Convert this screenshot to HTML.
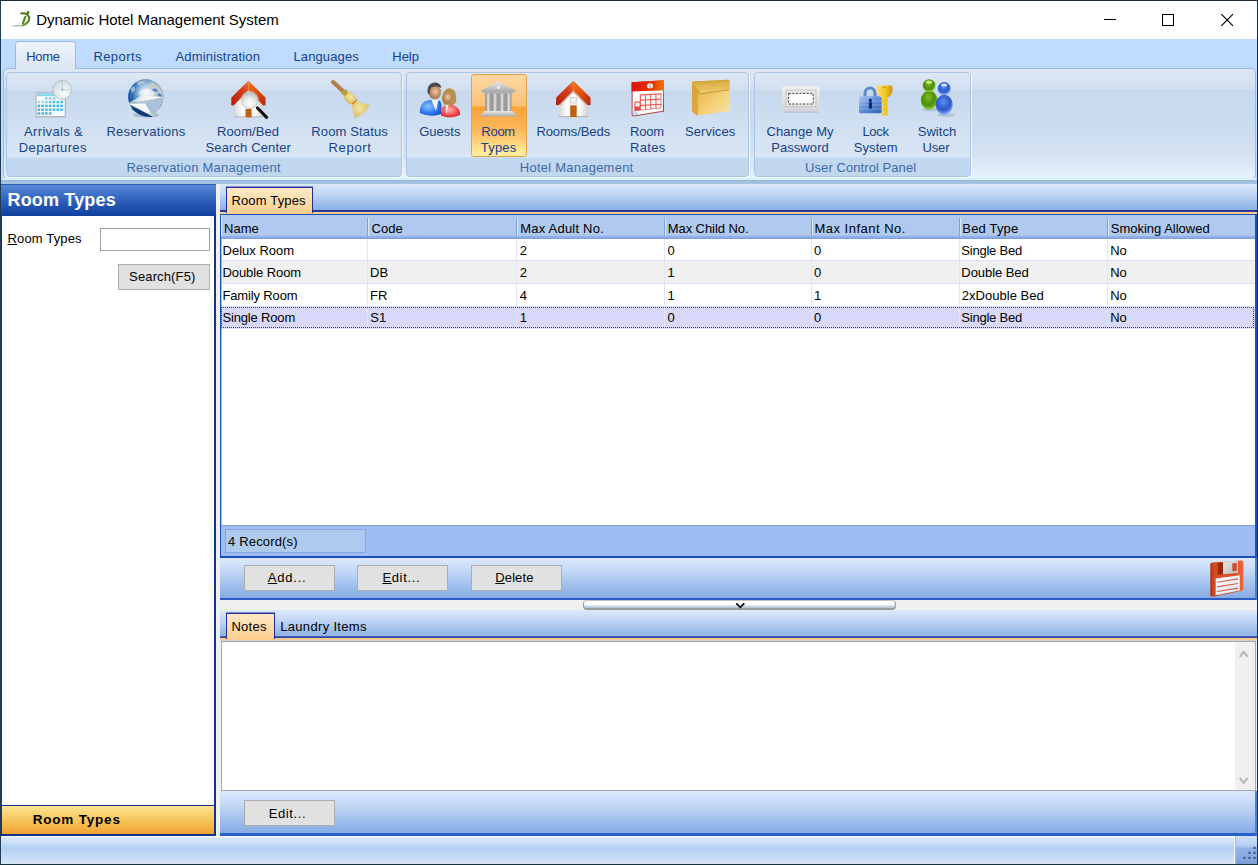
<!DOCTYPE html>
<html lang="en">
<head>
<meta charset="utf-8">
<title>Dynamic Hotel Management System</title>
<style>
html,body{margin:0;padding:0;}
body{position:relative;width:1258px;height:865px;overflow:hidden;background:#fff;font-family:'Liberation Sans',sans-serif;font-size:13px;color:#000;}
div,span,svg{position:absolute;box-sizing:border-box;}
.t{white-space:pre;line-height:1;}
u{text-decoration:underline;text-underline-offset:1px;}
.btn{background:#e1e1e1;border:1px solid #adadad;}
.grp{border:1px solid #abc5e8;border-radius:4px;background:linear-gradient(#dee8f5 0px,#d1dff0 17px,#c7d8ed 18px,#d9e6f5 84px,#c2d8f1 85px,#c1d7f0 104px);box-shadow:1px 1px 0 rgba(255,255,255,.7);}
.bar{background:linear-gradient(#dce9fb 0%,#c6daf7 30%,#9fbfec 70%,#86abe3 100%);}
</style>
</head>
<body>
<!-- window frame -->
<div style="left:0;top:0;width:1258px;height:1px;background:#1b2b3a;"></div>
<div style="left:0;top:0;width:1px;height:865px;background:#1d3d57;"></div>
<div style="left:0;top:864px;width:1258px;height:1px;background:#1b2b3a;"></div>
<div style="left:1257px;top:0;width:1px;height:865px;background:#12305a;z-index:50;"></div>
<!-- title bar -->
<div style="left:1px;top:1px;width:1257px;height:38px;background:#fff;"></div>
<svg style="left:8px;top:8px;" width="26" height="22" viewBox="8 8 26 22">
  <path d="M11.6 25.8 Q16 24.4 21 24.8 L21 26.4 Q16 26.6 11.6 26.6 Z" fill="#b2c69e"/>
  <path d="M21.2 13.4 Q27.5 12.6 29.2 17.4 Q30 22.4 23 25.4" fill="none" stroke="#4d7a1c" stroke-width="2" stroke-linecap="round"/>
  <path d="M21.5 25.6 Q25 25.8 27.6 23.4" fill="none" stroke="#8aa86a" stroke-width="1.2" stroke-linecap="round"/>
  <path d="M25.4 16.8 L22.9 23.2" fill="none" stroke="#55821f" stroke-width="2.1" stroke-linecap="round"/>
  <circle cx="28.1" cy="12.5" r="1.4" fill="#4d7a1c"/>
  <path d="M26.3 15 L28.1 12.5" stroke="#4d7a1c" stroke-width="1.4" fill="none"/>
</svg>
<!-- window buttons -->
<div style="left:1104px;top:19px;width:12px;height:1px;background:#000;"></div>
<div style="left:1162px;top:14px;width:12px;height:12px;border:1px solid #000;"></div>
<svg style="left:1220px;top:13px;" width="15" height="15" viewBox="0 0 15 15"><path d="M1.3 1.2 L13 12.9 M13 1.2 L1.3 12.9" stroke="#000" stroke-width="1.15" fill="none"/></svg>
<!-- ribbon tab row -->
<div style="left:1px;top:39px;width:1257px;height:31px;background:#bfdbff;"></div>
<!-- ribbon body -->
<div style="left:1px;top:69px;width:1257px;height:115px;background:#bfdbff;"></div>
<div style="left:1px;top:180px;width:1257px;height:4px;background:linear-gradient(#9ab8da,#a9c5e5);"></div>
<div style="left:3px;top:68px;width:1253px;height:111px;border:1px solid #9bbbe3;border-radius:4px;background:linear-gradient(#dde7f5 0px,#d3e0f1 20px,#c8d9ed 21px,#ccdcef 60px,#d5e3f3 88px,#e6f3fd 109px);"></div>
<div style="left:2px;top:178px;width:1255px;height:2px;background:#d6f1fc;border-radius:0 0 3px 3px;"></div>
<!-- home tab -->
<div style="left:15px;top:41px;width:61px;height:28px;border:1px solid #9bbbe3;border-bottom:none;border-radius:4px 4px 0 0;background:linear-gradient(#eef4fc,#dbe6f4);"></div>
<!-- groups -->
<div class="grp" style="left:6px;top:72px;width:396px;height:105px;"></div>
<div class="grp" style="left:406px;top:72px;width:343px;height:105px;"></div>
<div class="grp" style="left:754px;top:72px;width:217px;height:105px;"></div>
<!-- selected button -->
<div style="left:471px;top:74px;width:56px;height:83px;border:1px solid #e3a343;border-radius:3px;background:linear-gradient(#fcd9a4 0px,#fbc176 31px,#f9a338 32px,#fbb75a 55px,#ffe48e 74px,#fff0a4 81px);"></div>

<!-- ribbon icons -->
<svg style="left:0;top:70px;" width="1258" height="60" viewBox="0 70 1258 60">
<defs>
  <linearGradient id="gCal" x1="0" y1="0" x2="0" y2="1"><stop offset="0" stop-color="#7fd3e6"/><stop offset="1" stop-color="#1fa4d2"/></linearGradient>
  <radialGradient id="gClock" cx=".6" cy=".65" r=".7"><stop offset="0" stop-color="#fbfdfd"/><stop offset="1" stop-color="#cfd9de"/></radialGradient>
  <radialGradient id="gGlobe" cx=".55" cy=".38" r=".62"><stop offset="0" stop-color="#f4f8fb"/><stop offset=".35" stop-color="#a9c9e4"/><stop offset=".7" stop-color="#2f73b6"/><stop offset="1" stop-color="#0f4888"/></radialGradient>
  <linearGradient id="gGlobeR" x1="0" y1="0" x2="1" y2="0"><stop offset=".45" stop-color="#c8c8c8" stop-opacity="0"/><stop offset="1" stop-color="#b4b8bc" stop-opacity=".95"/></linearGradient>
  <linearGradient id="gRoofL" x1="1" y1="0" x2="0" y2="1"><stop offset="0" stop-color="#ee7a42"/><stop offset=".35" stop-color="#d8401a"/><stop offset="1" stop-color="#b01c08"/></linearGradient>
  <linearGradient id="gRoofR" x1="0" y1="0" x2="1" y2="1"><stop offset="0" stop-color="#f0701c"/><stop offset=".4" stop-color="#e4560e"/><stop offset="1" stop-color="#b4240a"/></linearGradient>
  <linearGradient id="gWall" x1="0" y1="0" x2="1" y2="0"><stop offset="0" stop-color="#d4d4d4"/><stop offset=".3" stop-color="#ffffff"/><stop offset=".7" stop-color="#ffffff"/><stop offset="1" stop-color="#d0d0d0"/></linearGradient>
  <radialGradient id="gLens" cx=".5" cy=".7" r=".7"><stop offset="0" stop-color="#ffffff"/><stop offset=".55" stop-color="#e4e4e4"/><stop offset="1" stop-color="#b4b4b4"/></radialGradient>
  <radialGradient id="gStraw" cx=".45" cy=".4" r=".7"><stop offset="0" stop-color="#f6e6a4"/><stop offset="1" stop-color="#d2b455"/></radialGradient>
  <linearGradient id="gHandle" x1="0" y1="1" x2="1" y2="0"><stop offset="0" stop-color="#9a6a38"/><stop offset="1" stop-color="#cc9662"/></linearGradient>
  <radialGradient id="gSkin" cx=".55" cy=".45" r=".6"><stop offset="0" stop-color="#f2c9a0"/><stop offset="1" stop-color="#9a6844"/></radialGradient>
  <radialGradient id="gBlueB" cx=".4" cy=".4" r=".75"><stop offset="0" stop-color="#8cc0ff"/><stop offset=".6" stop-color="#2f78ee"/><stop offset="1" stop-color="#0d3fc0"/></radialGradient>
  <radialGradient id="gRedB" cx=".45" cy=".4" r=".75"><stop offset="0" stop-color="#ffb0a8"/><stop offset=".6" stop-color="#f04848"/><stop offset="1" stop-color="#c01020"/></radialGradient>
  <linearGradient id="gSilver" x1="0" y1="0" x2="0" y2="1"><stop offset="0" stop-color="#ebebeb"/><stop offset="1" stop-color="#a8a8a8"/></linearGradient>
  <linearGradient id="gCol" x1="0" y1="0" x2="1" y2="0"><stop offset="0" stop-color="#8e8e8e"/><stop offset=".5" stop-color="#e6e6e6"/><stop offset="1" stop-color="#9a9a9a"/></linearGradient>
  <linearGradient id="gRedTop" x1="0" y1="0" x2="1" y2="0"><stop offset="0" stop-color="#d81808"/><stop offset=".6" stop-color="#e83008"/><stop offset="1" stop-color="#f27400"/></linearGradient>
  <linearGradient id="gBox" x1="0" y1="0" x2="1" y2="1"><stop offset="0" stop-color="#e4a838"/><stop offset=".55" stop-color="#f2cc70"/><stop offset="1" stop-color="#f8e2a4"/></linearGradient>
  <linearGradient id="gFlap" x1="0" y1="0" x2="0.15" y2="1"><stop offset="0" stop-color="#c8942a"/><stop offset=".3" stop-color="#dcae48"/><stop offset="1" stop-color="#efca70"/></linearGradient>
  <linearGradient id="gPwd" x1="0" y1="0" x2="0" y2="1"><stop offset="0" stop-color="#f0f0f0"/><stop offset="1" stop-color="#d4d4d4"/></linearGradient>
  <linearGradient id="gLock" x1="0" y1="0" x2="1" y2="1"><stop offset="0" stop-color="#a8c8f4"/><stop offset=".5" stop-color="#5c8cd4"/><stop offset="1" stop-color="#3460b0"/></linearGradient>
  <linearGradient id="gKey" x1="0" y1="0" x2="1" y2="0"><stop offset="0" stop-color="#fce27a"/><stop offset=".6" stop-color="#f2c21c"/><stop offset="1" stop-color="#c89408"/></linearGradient>
  <radialGradient id="gGreen" cx=".45" cy=".35" r=".75"><stop offset="0" stop-color="#7cbc20"/><stop offset=".55" stop-color="#4a8c08"/><stop offset=".85" stop-color="#8ccc30"/><stop offset="1" stop-color="#c4ec70"/></radialGradient>
  <radialGradient id="gBlue" cx=".45" cy=".35" r=".75"><stop offset="0" stop-color="#5c8cf0"/><stop offset=".55" stop-color="#2c58c8"/><stop offset=".85" stop-color="#88acf4"/><stop offset="1" stop-color="#dce8fc"/></radialGradient>
  <linearGradient id="gWingA" x1="0" y1="0" x2="1" y2="0"><stop offset="0" stop-color="#a8bccf"/><stop offset=".4" stop-color="#eef1f4"/><stop offset="1" stop-color="#ffffff"/></linearGradient>
  <linearGradient id="gWingC" x1="0" y1="0" x2="1" y2="1"><stop offset="0" stop-color="#ffffff"/><stop offset=".6" stop-color="#f4f5f7"/><stop offset="1" stop-color="#c8ccd2"/></linearGradient>
</defs>
<!-- 1 arrivals & departures: calendar + clock -->
<rect x="35.5" y="92" width="30.5" height="25.5" rx="1" fill="#b4b8c0"/>
<rect x="36.7" y="93" width="28" height="23" fill="#f4fbfd"/>
<rect x="37" y="93.2" width="27.4" height="3" fill="#8dd6e8"/>
<g fill="url(#gCal)">
  <rect x="37.5" y="97" width="6.8" height="2.6" fill="#ffffff"/><rect x="45" y="97.2" width="2.6" height="2.2" opacity=".7"/><rect x="48.9" y="97.2" width="2.6" height="2.2" opacity=".7"/><rect x="52.8" y="97.2" width="2.6" height="2.2" opacity=".7"/>
  <rect x="37.5" y="100.6" width="2.6" height="2.6" opacity=".45"/><rect x="41.3" y="100.6" width="2.6" height="2.6" opacity=".45"/><rect x="45.1" y="100.6" width="2.6" height="2.6" opacity=".6"/><rect x="48.9" y="100.6" width="2.6" height="2.6" opacity=".8"/><rect x="52.7" y="100.6" width="2.6" height="2.6"/><rect x="56.5" y="100.6" width="2.6" height="2.6"/><rect x="60.3" y="100.6" width="2.6" height="2.6"/>
  <rect x="37.5" y="104.4" width="2.6" height="2.6"/><rect x="41.3" y="104.4" width="2.6" height="2.6"/><rect x="45.1" y="104.4" width="2.6" height="2.6"/><rect x="48.9" y="104.4" width="2.6" height="2.6"/><rect x="52.7" y="104.4" width="2.6" height="2.6"/><rect x="56.5" y="104.4" width="2.6" height="2.6"/><rect x="60.3" y="104.4" width="2.6" height="2.6"/>
  <rect x="37.5" y="108.2" width="2.6" height="2.6"/><rect x="41.3" y="108.2" width="2.6" height="2.6"/><rect x="45.1" y="108.2" width="2.6" height="2.6"/><rect x="48.9" y="108.2" width="2.6" height="2.6"/><rect x="52.7" y="108.2" width="2.6" height="2.6"/><rect x="56.5" y="108.2" width="2.6" height="2.6"/><rect x="60.3" y="108.2" width="2.6" height="2.6"/>
  <rect x="37.5" y="112" width="2.6" height="2.6"/><rect x="41.3" y="112" width="2.6" height="2.6"/><rect x="45.1" y="112" width="2.6" height="2.6"/><rect x="48.9" y="112" width="2.6" height="2.6"/>
</g>
<circle cx="62.2" cy="89.8" r="9.4" fill="url(#gClock)" stroke="#b6c0c6" stroke-width="1"/>
<path d="M62.2 81.5 V89.8 H69" stroke="#a9c0cc" stroke-width=".8" fill="none"/>
<circle cx="62.2" cy="89.8" r="1" fill="#7fa8bc"/>
<!-- 2 reservations: globe + paper plane -->
<ellipse cx="146" cy="115" rx="13" ry="2.5" fill="#6a7a90" opacity=".35"/>
<circle cx="145.7" cy="96.9" r="17.6" fill="url(#gGlobe)"/>
<circle cx="145.7" cy="96.9" r="17.6" fill="url(#gGlobeR)"/>
<path d="M152 82 Q160 86 162.5 94 L158 95 L151 90 L147 88 Z" fill="#c9ccd0" opacity=".9"/><path d="M137 82.5 Q141 80 146 80.5 L143 84 L138 85 Z M131 88 L134 86 L135 90 L131.5 93 Z" fill="#c4c8cc" opacity=".85"/><path d="M150.5 89.5 l5 -1 l3 2.6 l-4.4 1.2 z M158.5 92.5 l3 2.6 l-.6 2.6 l-3 -2 z" fill="#3a7ac2" opacity=".9"/><ellipse cx="147" cy="93" rx="8" ry="4.5" fill="#ffffff" opacity=".55"/>
<path d="M131 108 Q140 118 153 117 L146 110 Z" fill="#0c3c78"/>
<path d="M128 103.6 L141.6 95.6 L164.5 96.9 L141 101.6 Z" fill="url(#gWingA)"/>
<path d="M128 103.6 L141 101.4 L164.5 96.9 L145.4 103.8 Z" fill="#bcc6d0"/>
<path d="M128 103.6 L145.4 103.6 L154 117.3 Z" fill="url(#gWingC)"/>
<path d="M145.4 103.6 L164.5 96.9 L154 117.3 Z" fill="#a9c2d8"/>
<!-- 3 room/bed search: house + magnifier -->
<path d="M234 117.3 V102.5 L248.4 88.8 L262.7 102.5 V117.3 Z" fill="url(#gWall)"/>
<rect x="234" y="116.3" width="28.7" height="1.2" fill="#b8b8b8"/>
<rect x="245.5" y="109" width="6.1" height="8.3" fill="#c2600e"/>
<path d="M248.4 80.7 L231.4 97.4 L231.2 105.2 L233.6 105.4 L248.4 90.6 Z" fill="url(#gRoofL)"/>
<path d="M248.4 80.7 L265.4 97.4 L265.6 105.2 L263.2 105.4 L248.4 90.6 Z" fill="url(#gRoofR)"/>

<line x1="257.5" y1="108" x2="266.6" y2="117.3" stroke="#111" stroke-width="3.2" stroke-linecap="round"/>
<circle cx="249.7" cy="100.1" r="8.4" fill="url(#gLens)" stroke="#c4c4c4" stroke-width="1"/>
<!-- 4 room status: broom -->
<line x1="333.2" y1="82" x2="344" y2="92" stroke="url(#gHandle)" stroke-width="4.4" stroke-linecap="round"/>
<path d="M353.2 101.6 Q361 101.8 369.4 105 Q367.5 112.5 355.2 118.2 Q352.2 110.5 351.6 103.4 Z" fill="url(#gStraw)"/>
<ellipse cx="349.9" cy="98" rx="7" ry="5.2" transform="rotate(47 349.9 98)" fill="url(#gStraw)"/>
<ellipse cx="344.6" cy="92.4" rx="3.2" ry="2.3" transform="rotate(-43 344.6 92.4)" fill="#b2a042"/>
<line x1="352.2" y1="104" x2="357.2" y2="99.6" stroke="#d87820" stroke-width="1.1"/>
<line x1="344.6" y1="95.6" x2="347.8" y2="92.8" stroke="#d87820" stroke-width=".9"/>
<!-- 5 guests -->
<path d="M419.8 113 Q419.5 101 430 99.9 H438 Q442 101 441.5 108 L441 114 Q431 118 419.8 113 Z" fill="url(#gBlueB)"/>
<path d="M431.5 100 L436 111 L438.5 100 Z" fill="#f4f4f4"/>
<ellipse cx="434.8" cy="92.2" rx="6.2" ry="7" fill="url(#gSkin)"/>
<path d="M427.6 93 Q426.5 84 434 82.5 Q441 82.5 441.2 88 Q436 85.5 431 87.5 Q430 90 429.4 94.5 Z" fill="#4a4a4a"/>
<path d="M441 113 Q441 105 448 104.5 Q458 104.5 460 112 L460 115 Q450 119.5 441 115.5 Z" fill="url(#gRedB)"/>
<path d="M445.5 105 L446.5 114.5 L448.5 105 Z" fill="#fbeeee"/>
<path d="M442.3 101 Q441.5 90 448.5 88.2 Q456.5 88 456.3 99 Q456.3 104 452.5 105.2 L444 104.5 Z" fill="#b4944a"/>
<ellipse cx="447.3" cy="97.6" rx="4.9" ry="5.8" fill="url(#gSkin)"/>
<!-- 6 room types: bank -->
<path d="M498.3 81.5 L515.8 90.6 L515.4 92 H481.4 L481 90.6 Z" fill="url(#gSilver)"/>
<circle cx="498.3" cy="87.6" r="1.5" fill="#f4f4f4"/>
<rect x="483.8" y="92" width="29" height="1.8" fill="#b0b0b0"/>
<rect x="485.2" y="93.6" width="26.4" height="17.6" fill="#9c9c9c"/>
<rect x="485.8" y="93.6" width="4.6" height="17.6" fill="url(#gCol)"/><rect x="492.6" y="93.6" width="4.6" height="17.6" fill="url(#gCol)"/><rect x="499.6" y="93.6" width="4.6" height="17.6" fill="url(#gCol)"/><rect x="506.4" y="93.6" width="4.6" height="17.6" fill="url(#gCol)"/>
<path d="M484.6 111 H512.2 L516.4 115.2 V116.6 H480.6 V115.2 Z" fill="url(#gSilver)"/>
<!-- 7 rooms/beds: house -->
<path d="M558.6 117 V102.5 L573.3 88.6 L588 102.5 V117 Z" fill="url(#gWall)"/>
<rect x="558.6" y="116" width="29.4" height="1.2" fill="#b8b8b8"/>
<rect x="570.2" y="105.3" width="6.5" height="11.7" fill="#c2600e"/>
<rect x="570.2" y="97.4" width="6.6" height="5.6" fill="#f2f2f2" stroke="#c0c0c0" stroke-width=".7"/>
<path d="M573.3 80.8 L556.2 97.6 L556 105 L558.4 105.2 L573.3 90.6 Z" fill="url(#gRoofL)"/>
<path d="M573.3 80.8 L590.4 97.6 L590.6 105 L588.2 105.2 L573.3 90.6 Z" fill="url(#gRoofR)"/>
<path d="M573.3 90.6 L558.6 105 L560.4 105 L573.3 92.4 L586.2 105 L588 105 Z" fill="#8a1808" opacity=".35"/>
<!-- 8 room rates: calendar -->
<path d="M631.6 82.3 L663.6 80.2 L664 111.6 L633.6 116.4 Q631.6 116.4 631.6 114.6 Z" fill="#b83030"/>
<path d="M632.6 91 L663 90 L663 110.8 L634 115.4 Q632.6 115.4 632.6 114 Z" fill="#fdfdfd"/>
<path d="M631.6 82.3 L663.6 80.2 L663.8 90.2 L631.6 91.6 Z" fill="url(#gRedTop)"/>
<ellipse cx="650" cy="85.8" rx="3" ry="2.6" fill="#f0f0f0"/><rect x="649.6" y="83.4" width=".9" height="4.8" fill="#a09090"/>
<path d="M639.8 94.6 L661.4 93.2 L661.4 108.2 L639.8 110.6 Z M634.4 101.8 L639.8 101.3 V110.6 L634.4 111.2 Z" fill="#e44848"/>
<g fill="#fff5f3">
 <rect x="640.8" y="95.4" width="4.3" height="4.2"/><rect x="646" y="95.1" width="4.3" height="4.2"/><rect x="651.2" y="94.8" width="4.3" height="4.2"/><rect x="656.4" y="94.5" width="4.3" height="4.2"/><rect x="640.8" y="100.6" width="4.3" height="4.2"/><rect x="646" y="100.3" width="4.3" height="4.2"/><rect x="651.2" y="100.0" width="4.3" height="4.2"/><rect x="656.4" y="99.7" width="4.3" height="4.2"/><rect x="640.8" y="105.8" width="4.3" height="3.8"/><rect x="646" y="105.5" width="4.3" height="3.5"/><rect x="651.2" y="105.2" width="4.3" height="3.3"/><rect x="656.4" y="104.9" width="4.3" height="3.0"/><rect x="635.4" y="102.6" width="4.2" height="3.9"/>
</g>
<path d="M632.6 109.5 L640.5 114.4 L634 115.4 Q632.6 115.4 632.6 114 Z" fill="#bcdcf0"/>
<!-- 9 services: box -->
<path d="M692 83 Q692 81.6 693.6 81.5 L728 79.7 Q729.7 79.7 729.7 81.4 L729.7 109.8 Q729.7 111.3 728.2 111.6 L698 115.2 Q696 115.3 695 114.2 L692.6 112 Q692 111.4 692 110.4 Z" fill="url(#gBox)"/>
<path d="M692 83 Q692 81.6 693.6 81.5 L728 79.7 Q729.7 79.7 729.7 81.4 L729.7 88.4 Q729.6 89.6 728.4 89.8 L701.5 93.6 Q699.8 93.8 699.2 92.4 L696.4 85.8 Z" fill="url(#gFlap)"/>
<path d="M692 83 L697.8 89 L698 115.2 Q696 115.3 695 114.2 L692.6 112 Q692 111.4 692 110.4 Z" fill="#d89c30" opacity=".75"/>
<path d="M697.6 90 L699.6 93.8 L729.4 89.8" stroke="#b8862a" stroke-width="1" fill="none" opacity=".75"/>
<!-- 10 change password -->
<rect x="783.5" y="111.2" width="35" height="1.6" rx=".8" fill="#8090a8" opacity=".35"/>
<rect x="782.2" y="86.5" width="37.4" height="24.8" rx="1.5" fill="url(#gPwd)"/>
<rect x="786" y="90" width="30" height="16.6" fill="#e6e6e6" stroke="#c2c2c2" stroke-width=".8"/>
<rect x="788.6" y="93.4" width="24.6" height="10.6" fill="#fff" stroke="#444" stroke-width="1" stroke-dasharray="2.2 1.4"/>
<!-- 11 lock system -->
<path d="M865 97 V93.5 A5 5.6 0 0 1 875 93.5 V97" fill="none" stroke="#5c88d0" stroke-width="3"/>
<rect x="859" y="96.3" width="22.6" height="17" rx="1.5" fill="url(#gLock)"/>
<path d="M859 101 H881.6 M859 105 H881.6 M859 109 H881.6" stroke="#c4d8f8" stroke-width=".6" opacity=".6"/>
<path d="M870.4 102 a1.6 1.6 0 1 1 .01 0 M869.2 103.5 h2.4 l.5 5 h-3.4 z" fill="#14206c"/>
<circle cx="870.4" cy="103.6" r="1.7" fill="#14206c"/>
<path d="M876.4 87 Q876.4 85.4 878 85.4 H891 Q892.4 85.4 892.4 87 V91 Q892 96 887.5 97.3 V115.4 H882 L882 112.5 H883.2 V110.5 H882 V106.5 H883.2 V104 H882 V97.3 Q877 96 876.4 91 Z" fill="url(#gKey)"/>
<rect x="883" y="87" width="3" height="1" fill="#b89018"/>
<!-- 12 switch user -->
<ellipse cx="931" cy="109.5" rx="9" ry="1.8" fill="#70809c" opacity=".3"/>
<ellipse cx="946" cy="115" rx="9" ry="1.8" fill="#70809c" opacity=".3"/>
<ellipse cx="929.1" cy="100.2" rx="8.2" ry="9.5" fill="url(#gGreen)"/>
<circle cx="929.1" cy="85.6" r="6.4" fill="url(#gGreen)"/>
<ellipse cx="929.1" cy="82.2" rx="3" ry="1.6" fill="#d8f498" opacity=".9"/>
<ellipse cx="944.2" cy="104.8" rx="8.6" ry="10" fill="url(#gBlue)"/>
<circle cx="944.2" cy="88.6" r="6.5" fill="url(#gBlue)"/>
<ellipse cx="944.2" cy="85" rx="3" ry="1.6" fill="#e4eefc" opacity=".9"/>
</svg>

<!-- workspace bg -->
<div style="left:1px;top:184px;width:1257px;height:652px;background:#f0f0f0;"></div>
<!-- left panel -->
<div style="left:1px;top:184px;width:215px;height:652px;border:1px solid #12328c;border-width:0 2px 2px 1px;background:#fff;"></div>
<div style="left:1px;top:184px;width:215px;height:32px;background:linear-gradient(#5988d6 0px,#4173c8 8px,#2456b2 20px,#10409f 31px);border-top:1px solid #2c5bb5;"></div>
<div style="left:100px;top:228px;width:110px;height:23px;border:1px solid #a3a3a3;background:#fff;"></div>
<div class="btn" style="left:118px;top:264px;width:92px;height:26px;"></div>
<div style="left:2px;top:805px;width:212px;height:29px;border-top:1px solid #12328c;background:linear-gradient(#fbe492 0%,#f7c65c 50%,#efa332 100%);"></div>

<!-- main tab strip -->
<div style="left:220px;top:184px;width:1038px;height:27px;background:linear-gradient(#dce9fb 0%,#c3d8f6 35%,#9dbdeb 75%,#8aaee4 100%);"></div>
<div style="left:220px;top:210px;width:1038px;height:2px;background:linear-gradient(#1c2f98,#3a3c96);"></div>
<div style="left:220px;top:212px;width:1038px;height:2px;background:#fdcb8b;"></div>
<div style="left:226px;top:187px;width:87px;height:26px;border:1px solid #222c96;box-shadow:0 -1px 0 rgba(34,44,150,.45);border-bottom:none;background:linear-gradient(#ffe9c6,#fddcaa 50%,#fdcd8c);"></div>
<!-- grid -->
<div style="left:220px;top:214px;width:1037px;height:344px;border:1px solid #1c4fb8;border-width:1px 2px 2px 1px;background:#fff;"></div>
<div style="left:221px;top:215px;width:1034px;height:24px;background:linear-gradient(#afc9ef 0px,#afc9ef 20px,#94b3e6 21.5px,#7c9eda 24px);"></div>
<div style="left:221px;top:215px;width:1px;height:21px;background:#e6effb;"></div>
<!-- header separators -->
<div style="left:367px;top:218px;width:1px;height:18px;background:#7da0dc;"></div><div style="left:368px;top:218px;width:1px;height:18px;background:#dbe8fa;"></div>
<div style="left:516px;top:218px;width:1px;height:18px;background:#7da0dc;"></div><div style="left:517px;top:218px;width:1px;height:18px;background:#dbe8fa;"></div>
<div style="left:664px;top:218px;width:1px;height:18px;background:#7da0dc;"></div><div style="left:665px;top:218px;width:1px;height:18px;background:#dbe8fa;"></div>
<div style="left:811px;top:218px;width:1px;height:18px;background:#7da0dc;"></div><div style="left:812px;top:218px;width:1px;height:18px;background:#dbe8fa;"></div>
<div style="left:959px;top:218px;width:1px;height:18px;background:#7da0dc;"></div><div style="left:960px;top:218px;width:1px;height:18px;background:#dbe8fa;"></div>
<div style="left:1107px;top:218px;width:1px;height:18px;background:#7da0dc;"></div><div style="left:1108px;top:218px;width:1px;height:18px;background:#dbe8fa;"></div>
<div style="left:221px;top:239px;width:1px;height:286px;background:rgba(28,79,184,.35);z-index:3;"></div>
<!-- rows -->
<div style="left:221px;top:239px;width:1034px;height:22px;background:#fff;border-bottom:1px solid #e0e0fa;"></div>
<div style="left:221px;top:261px;width:1034px;height:23px;background:#f0f0f0;border-bottom:1px solid #e0e0fa;"></div>
<div style="left:221px;top:284px;width:1034px;height:23px;background:#fff;border-bottom:1px solid #e0e0fa;"></div>
<div style="left:221px;top:307px;width:1034px;height:22px;background:#d8d8fa;border-bottom:1px solid #e0e0fa;"></div>
<!-- cell vertical lines -->
<div style="left:367px;top:239px;width:1px;height:90px;background:#e4e4fb;"></div>
<div style="left:516px;top:239px;width:1px;height:90px;background:#e4e4fb;"></div>
<div style="left:664px;top:239px;width:1px;height:90px;background:#e4e4fb;"></div>
<div style="left:811px;top:239px;width:1px;height:90px;background:#e4e4fb;"></div>
<div style="left:959px;top:239px;width:1px;height:90px;background:#e4e4fb;"></div>
<div style="left:1107px;top:239px;width:1px;height:90px;background:#e4e4fb;"></div>
<div style="left:221px;top:307px;width:1033px;height:21px;border:1px dotted #3c3c50;"></div>
<!-- grid footer -->
<div style="left:221px;top:525px;width:1034px;height:31px;background:#a0bdf3;border-top:1px solid #7d9fe0;"></div>
<div style="left:225px;top:529px;width:141px;height:24px;background:#aecbef;border:1px solid #86a8e2;"></div>
<!-- button bar -->
<div class="bar" style="left:220px;top:558px;width:1037px;height:42px;border-bottom:2px solid #2a5cc4;border-right:2px solid #4c7cd4;"></div>
<div class="btn" style="left:244px;top:565px;width:91px;height:26px;"></div>
<div class="btn" style="left:357px;top:565px;width:91px;height:26px;"></div>
<div class="btn" style="left:471px;top:565px;width:91px;height:26px;"></div>
<!-- save icon -->
<svg style="left:1206px;top:556px;" width="42" height="44" viewBox="1206 556 42 44">
<defs><linearGradient id="gFl" x1="0" y1="0" x2="1" y2="0"><stop offset="0" stop-color="#b4300c"/><stop offset=".12" stop-color="#d64a20"/><stop offset=".8" stop-color="#e2532a"/><stop offset="1" stop-color="#f0683e"/></linearGradient>
<linearGradient id="gSh" x1="0" y1="0" x2="1" y2="1"><stop offset="0" stop-color="#e6e6e6"/><stop offset="1" stop-color="#bcbcbc"/></linearGradient>
<linearGradient id="gLb" x1="0" y1="0" x2="1" y2="1"><stop offset="0" stop-color="#ffffff"/><stop offset="1" stop-color="#d4e2f6"/></linearGradient></defs>
<path d="M1210.3 564.5 Q1210.3 562.6 1212.2 562.4 L1241 560.4 Q1243.4 560.3 1243.4 562.6 L1243.4 588.6 Q1243.4 590.4 1241.6 590.9 L1213 596.8 Q1210.3 597.2 1210.3 594.6 Z" fill="url(#gFl)"/>
<path d="M1217.8 562.8 L1223 562.4 V574.2 L1217.8 574.8 Z" fill="#98280c"/>
<path d="M1223 561.6 L1238 560.8 V572.8 L1223 574.2 Z" fill="url(#gSh)"/>
<path d="M1232.3 563.2 L1236.8 563 V570.8 L1232.3 571.3 Z" fill="#cc4c34"/>
<path d="M1215.7 578.5 L1239.8 575.2 V590.5 L1215.7 595.2 Z" fill="url(#gLb)"/>
<path d="M1217.2 582.3 L1238 578.9 M1217.2 586.9 L1238 583.5 M1217.2 591.5 L1238 588.1" stroke="#e05a3c" stroke-width="1.1" fill="none"/>
</svg>
<!-- splitter -->
<div style="left:220px;top:600px;width:1038px;height:10px;background:#f0f0f0;"></div>
<div style="left:583px;top:600px;width:313px;height:10px;border:1px solid #9c9c9c;border-top-color:#c4c4c4;border-bottom-width:2px;border-radius:4px;background:linear-gradient(#fff 0%,#fff 45%,#a9c0d2 100%);"></div>
<svg style="left:735px;top:601px;" width="11" height="8" viewBox="0 0 11 8"><path d="M1.3 2.3 L5.3 6.3 L9.3 2.3" stroke="#000" stroke-width="1.7" fill="none"/></svg>
<!-- lower tab strip -->
<div style="left:220px;top:610px;width:1038px;height:28px;background:linear-gradient(#dce9fb 0%,#c3d8f6 35%,#9dbdeb 75%,#8aaee4 100%);"></div>
<div style="left:220px;top:636px;width:1038px;height:2px;background:linear-gradient(#5672c0,#1c2f98);"></div>
<div style="left:220px;top:638px;width:1038px;height:2px;background:#fdcb8b;"></div>
<div style="left:220px;top:640px;width:1038px;height:1px;background:#cdd0d4;"></div>
<div style="left:226px;top:613px;width:49px;height:26px;border:1px solid #222c96;box-shadow:0 -1px 0 rgba(34,44,150,.45);border-bottom:none;background:linear-gradient(#ffe9c6,#fddcaa 50%,#fdcd8c);"></div>
<!-- notes box -->
<div style="left:221px;top:641px;width:1035px;height:150px;border:1px solid #a8a8a8;background:#fff;"></div>
<div style="left:1235px;top:642px;width:20px;height:148px;background:#f0f0f0;"></div>
<svg style="left:1236px;top:646px;" width="16" height="16" viewBox="1236 646 16 16"><path d="M1239.7 656.8 L1243.7 651.8 L1247.7 656.8" stroke="#b6b6b6" stroke-width="2" fill="none"/></svg>
<svg style="left:1236px;top:772px;" width="16" height="16" viewBox="1236 772 16 16"><path d="M1239.7 777.8 L1243.7 782.8 L1247.7 777.8" stroke="#b6b6b6" stroke-width="2" fill="none"/></svg>
<!-- bottom bar -->
<div class="bar" style="left:220px;top:791px;width:1037px;height:45px;border-bottom:3px solid #2560cc;border-right:2px solid #4c7cd4;"></div>
<div class="btn" style="left:244px;top:800px;width:91px;height:26px;"></div>

<!-- status bar -->
<div style="left:1px;top:836px;width:1256px;height:28px;background:linear-gradient(#fbfdff 0px,#f4f8fe 1px,#d6e5fa 2px,#cadef8 7px,#b3cff4 12px,#bdd5f5 17px,#ccdef7 23px,#d8e6f9 28px);"></div>
<div style="left:1236px;top:836px;width:21px;height:28px;background:linear-gradient(#cfe0f9 0%,#b4cdf3 35%,#8fb1e6 45%,#86a8e0 80%,#7c9cd6 100%);"></div>
<div style="left:1234px;top:836px;width:1px;height:28px;background:#f2f7fe;"></div>
<div style="left:1235px;top:836px;width:1px;height:28px;background:#9fbbe8;"></div>
<svg style="left:1242px;top:845px;" width="15" height="16" viewBox="1242 845 15 16"><g fill="#45587a"><rect x="1253.4" y="846.8" width="2.2" height="2.2"/><rect x="1248.4" y="851.8" width="2.2" height="2.2"/><rect x="1253.4" y="851.8" width="2.2" height="2.2"/><rect x="1243.4" y="856.8" width="2.2" height="2.2"/><rect x="1248.4" y="856.8" width="2.2" height="2.2"/><rect x="1253.4" y="856.8" width="2.2" height="2.2"/></g></svg>
<div style="left:0;top:864px;width:1258px;height:1px;background:#16303e;z-index:51;"></div>

<!-- text -->
<span class="t" style="left:36.2px;top:12.3px;font-size:15px;letter-spacing:-0.03px;">Dynamic Hotel Management System</span>
<span class="t" style="left:26.2px;top:50.0px;font-size:13px;color:#15428b;letter-spacing:-0.30px;">Home</span>
<span class="t" style="left:93.4px;top:50.0px;font-size:13px;color:#15428b;letter-spacing:0.43px;">Reports</span>
<span class="t" style="left:175.5px;top:50.0px;font-size:13px;color:#15428b;letter-spacing:0.16px;">Administration</span>
<span class="t" style="left:293.4px;top:50.0px;font-size:13px;color:#15428b;letter-spacing:0.14px;">Languages</span>
<span class="t" style="left:392.3px;top:50.0px;font-size:13px;color:#15428b;letter-spacing:-0.05px;">Help</span>
<span class="t" style="left:24.1px;top:125.2px;font-size:13px;color:#15428b;letter-spacing:0.32px;">Arrivals &amp;</span>
<span class="t" style="left:18.8px;top:141.2px;font-size:13px;color:#15428b;letter-spacing:0.37px;">Departures</span>
<span class="t" style="left:106.4px;top:125.2px;font-size:13px;color:#15428b;letter-spacing:0.28px;">Reservations</span>
<span class="t" style="left:217.1px;top:125.2px;font-size:13px;color:#15428b;letter-spacing:0.08px;">Room/Bed</span>
<span class="t" style="left:205.5px;top:141.2px;font-size:13px;color:#15428b;letter-spacing:0.13px;">Search Center</span>
<span class="t" style="left:311.3px;top:125.2px;font-size:13px;color:#15428b;letter-spacing:0.13px;">Room Status</span>
<span class="t" style="left:328.5px;top:141.2px;font-size:13px;color:#15428b;letter-spacing:0.69px;">Report</span>
<span class="t" style="left:419.2px;top:125.2px;font-size:13px;color:#15428b;letter-spacing:0.02px;">Guests</span>
<span class="t" style="left:481.3px;top:125.2px;font-size:13px;color:#15428b;letter-spacing:-0.26px;">Room</span>
<span class="t" style="left:480.8px;top:141.2px;font-size:13px;color:#15428b;letter-spacing:0.18px;">Types</span>
<span class="t" style="left:536.4px;top:125.2px;font-size:13px;color:#15428b;letter-spacing:-0.07px;">Rooms/Beds</span>
<span class="t" style="left:630.1px;top:125.2px;font-size:13px;color:#15428b;letter-spacing:-0.26px;">Room</span>
<span class="t" style="left:630.1px;top:141.2px;font-size:13px;color:#15428b;letter-spacing:0.28px;">Rates</span>
<span class="t" style="left:685.1px;top:125.2px;font-size:13px;color:#15428b;letter-spacing:0.03px;">Services</span>
<span class="t" style="left:766.6px;top:125.2px;font-size:13px;color:#15428b;letter-spacing:0.06px;">Change My</span>
<span class="t" style="left:771.2px;top:141.2px;font-size:13px;color:#15428b;letter-spacing:0.07px;">Password</span>
<span class="t" style="left:862.4px;top:125.2px;font-size:13px;color:#15428b;letter-spacing:-0.26px;">Lock</span>
<span class="t" style="left:853.8px;top:141.2px;font-size:13px;color:#15428b;letter-spacing:0.07px;">System</span>
<span class="t" style="left:917.7px;top:125.2px;font-size:13px;color:#15428b;letter-spacing:0.04px;">Switch</span>
<span class="t" style="left:922.4px;top:141.2px;font-size:13px;color:#15428b;letter-spacing:-0.12px;">User</span>
<span class="t" style="left:126.4px;top:160.6px;font-size:13px;color:#3e6aaa;letter-spacing:0.26px;">Reservation Management</span>
<span class="t" style="left:519.8px;top:160.6px;font-size:13px;color:#3e6aaa;letter-spacing:0.24px;">Hotel Management</span>
<span class="t" style="left:805.1px;top:160.6px;font-size:13px;color:#3e6aaa;letter-spacing:0.07px;">User Control Panel</span>
<span class="t" style="left:7.5px;top:191.0px;font-size:18px;font-weight:700;color:#fff;letter-spacing:0.17px;">Room Types</span>
<span class="t" style="left:7.5px;top:231.7px;font-size:13px;letter-spacing:0.15px;"><u>R</u>oom Types</span>
<span class="t" style="left:129.1px;top:270.0px;font-size:13px;letter-spacing:0.14px;">Search(F5)</span>
<span class="t" style="left:32.7px;top:813.4px;font-size:13.5px;font-weight:700;letter-spacing:0.80px;">Room Types</span>
<span class="t" style="left:231.4px;top:193.9px;font-size:13px;letter-spacing:0.16px;">Room Types</span>
<span class="t" style="left:224.1px;top:221.9px;font-size:13px;letter-spacing:-0.03px;">Name</span>
<span class="t" style="left:371.6px;top:221.9px;font-size:13px;letter-spacing:0.04px;">Code</span>
<span class="t" style="left:520.3px;top:221.9px;font-size:13px;letter-spacing:0.21px;">Max Adult No.</span>
<span class="t" style="left:667.7px;top:221.9px;font-size:13px;letter-spacing:-0.06px;">Max Child No.</span>
<span class="t" style="left:814.4px;top:221.9px;font-size:13px;letter-spacing:0.50px;">Max Infant No.</span>
<span class="t" style="left:962.3px;top:221.9px;font-size:13px;letter-spacing:0.17px;">Bed Type</span>
<span class="t" style="left:1110.8px;top:221.9px;font-size:13px;letter-spacing:-0.01px;">Smoking Allowed</span>
<span class="t" style="left:222.5px;top:243.6px;font-size:13px;letter-spacing:0.01px;">Delux Room</span>
<span class="t" style="left:519.8px;top:243.6px;font-size:13px;">2</span>
<span class="t" style="left:667.6px;top:243.6px;font-size:13px;">0</span>
<span class="t" style="left:814.1px;top:243.6px;font-size:13px;">0</span>
<span class="t" style="left:961.3px;top:243.6px;font-size:13px;letter-spacing:-0.22px;">Single Bed</span>
<span class="t" style="left:1110.2px;top:243.6px;font-size:13px;">No</span>
<span class="t" style="left:222.5px;top:266.0px;font-size:13px;letter-spacing:-0.08px;">Double Room</span>
<span class="t" style="left:370.0px;top:266.0px;font-size:13px;">DB</span>
<span class="t" style="left:519.8px;top:266.0px;font-size:13px;">2</span>
<span class="t" style="left:667.6px;top:266.0px;font-size:13px;">1</span>
<span class="t" style="left:814.1px;top:266.0px;font-size:13px;">0</span>
<span class="t" style="left:961.3px;top:266.0px;font-size:13px;letter-spacing:-0.06px;">Double Bed</span>
<span class="t" style="left:1110.2px;top:266.0px;font-size:13px;">No</span>
<span class="t" style="left:222.5px;top:288.8px;font-size:13px;letter-spacing:-0.15px;">Family Room</span>
<span class="t" style="left:370.0px;top:288.8px;font-size:13px;">FR</span>
<span class="t" style="left:519.8px;top:288.8px;font-size:13px;">4</span>
<span class="t" style="left:667.6px;top:288.8px;font-size:13px;">1</span>
<span class="t" style="left:814.1px;top:288.8px;font-size:13px;">1</span>
<span class="t" style="left:961.8px;top:288.8px;font-size:13px;letter-spacing:0.02px;">2xDouble Bed</span>
<span class="t" style="left:1110.2px;top:288.8px;font-size:13px;">No</span>
<span class="t" style="left:222.5px;top:311.2px;font-size:13px;letter-spacing:-0.17px;">Single Room</span>
<span class="t" style="left:370.3px;top:311.2px;font-size:13px;">S1</span>
<span class="t" style="left:519.8px;top:311.2px;font-size:13px;">1</span>
<span class="t" style="left:667.6px;top:311.2px;font-size:13px;">0</span>
<span class="t" style="left:814.1px;top:311.2px;font-size:13px;">0</span>
<span class="t" style="left:961.3px;top:311.2px;font-size:13px;letter-spacing:-0.22px;">Single Bed</span>
<span class="t" style="left:1110.2px;top:311.2px;font-size:13px;">No</span>
<span class="t" style="left:228.1px;top:535.4px;font-size:13px;letter-spacing:0.16px;">4 Record(s)</span>
<span class="t" style="left:267.8px;top:571.3px;font-size:13px;letter-spacing:0.77px;"><u>A</u>dd...</span>
<span class="t" style="left:382.4px;top:571.3px;font-size:13px;letter-spacing:0.66px;"><u>E</u>dit...</span>
<span class="t" style="left:495.3px;top:571.3px;font-size:13px;letter-spacing:0.10px;"><u>D</u>elete</span>
<span class="t" style="left:231.4px;top:620.0px;font-size:13px;letter-spacing:0.28px;">Notes</span>
<span class="t" style="left:280.2px;top:620.0px;font-size:13px;letter-spacing:0.33px;">Laundry Items</span>
<span class="t" style="left:268.7px;top:807.0px;font-size:13px;letter-spacing:0.61px;">Edit...</span>
</body>
</html>
